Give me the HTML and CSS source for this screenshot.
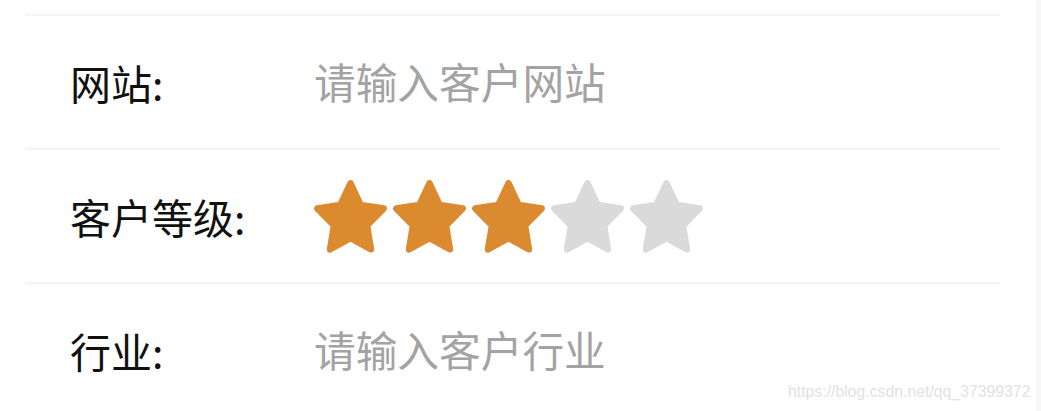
FILE: index.html
```html
<!DOCTYPE html>
<html lang="zh">
<head>
<meta charset="utf-8">
<title>客户信息</title>
<link rel="stylesheet" href="styles.css">
</head>
<body>
<div class="page">
  <main class="main">
    <div class="form">
      <div class="row">
        <span class="label">网站:</span>
        <span class="value placeholder">请输入客户网站</span>
      </div>
      <div class="row">
        <span class="label">客户等级:</span>
        <span class="value stars">
          <svg class="star on" viewBox="4 2 92 88" preserveAspectRatio="none"><polygon points="50,6 62.93,32.2 91.84,36.4 70.92,56.8 75.87,85.6 50,72 24.13,85.6 29.08,56.8 8.16,36.4 37.07,32.2"/></svg>
          <svg class="star on" viewBox="4 2 92 88" preserveAspectRatio="none"><polygon points="50,6 62.93,32.2 91.84,36.4 70.92,56.8 75.87,85.6 50,72 24.13,85.6 29.08,56.8 8.16,36.4 37.07,32.2"/></svg>
          <svg class="star on" viewBox="4 2 92 88" preserveAspectRatio="none"><polygon points="50,6 62.93,32.2 91.84,36.4 70.92,56.8 75.87,85.6 50,72 24.13,85.6 29.08,56.8 8.16,36.4 37.07,32.2"/></svg>
          <svg class="star" viewBox="4 2 92 88" preserveAspectRatio="none"><polygon points="50,6 62.93,32.2 91.84,36.4 70.92,56.8 75.87,85.6 50,72 24.13,85.6 29.08,56.8 8.16,36.4 37.07,32.2"/></svg>
          <svg class="star" viewBox="4 2 92 88" preserveAspectRatio="none"><polygon points="50,6 62.93,32.2 91.84,36.4 70.92,56.8 75.87,85.6 50,72 24.13,85.6 29.08,56.8 8.16,36.4 37.07,32.2"/></svg>
        </span>
      </div>
      <div class="row">
        <span class="label">行业:</span>
        <span class="value placeholder">请输入客户行业</span>
      </div>
    </div>
  </main>
  <div class="edge"></div>
</div>
<div class="watermark">https://blog.csdn.net/qq_37399372</div>
</body>
</html>
```

FILE: styles.css
```css
html, body {
  margin: 0;
  padding: 0;
  background: #ffffff;
  height: 100%;
  overflow: hidden;
}

body {
  font-family: "Noto Sans CJK SC", "Noto Sans", sans-serif;
  color: #111111;
}

.page {
  display: flex;
  height: 411px;
}

.main {
  width: 1036px;
  padding-left: 25px;
  box-sizing: border-box;
}

.edge {
  flex: 1;
  background: #f7f7f7;
}

.form {
  width: 975px;
  margin-top: 14px;
}

.row {
  display: flex;
  align-items: center;
  height: 132px;
  border-top: 2px solid #f4f4f4;
  padding-left: 45px;
  font-size: 41px;
  line-height: 1;
}

.label {
  width: 244px;
  flex: none;
  color: #111111;
}

.value {
  display: flex;
  align-items: center;
}

.placeholder {
  color: #a3a3a3;
  font-size: 41.7px;
}

.stars {
  gap: 6px;
}

.star {
  width: 73px;
  height: 73px;
  display: block;
}

.star polygon {
  fill: #dadada;
  stroke: #dadada;
  stroke-width: 8;
  stroke-linejoin: round;
}

.star.on polygon {
  fill: #dc8a2f;
  stroke: #dc8a2f;
}

.watermark {
  position: absolute;
  left: 788px;
  top: 383px;
  font-family: "Liberation Sans", Arial, sans-serif;
  font-size: 15.8px;
  color: #e2e2e2;
  white-space: nowrap;
}
```
